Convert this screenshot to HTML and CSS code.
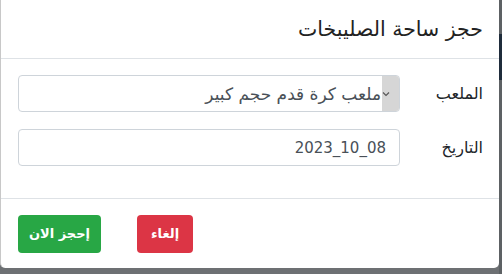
FILE: index.html
```html
<!DOCTYPE html>
<html lang="ar">
<head>
<meta charset="utf-8">
<link rel="stylesheet" href="styles.css">
</head>
<body>
<div class="stage">
  <div class="modal" dir="rtl">
    <div class="modal-header">
      <h5 class="modal-title">حجز ساحة الصليبخات</h5>
    </div>
    <div class="modal-body">
      <div class="form-row">
        <label class="form-label">الملعب</label>
        <div class="select">
          <span class="select-arrow"><svg width="8" height="6" viewBox="0 0 8 6"><path d="M1 1.5 L4 4.5 L7 1.5" fill="none" stroke="#555" stroke-width="1.1"/></svg></span>
          <span class="select-text">ملعب كرة قدم حجم كبير</span>
        </div>
      </div>
      <div class="form-row">
        <label class="form-label">التاريخ</label>
        <div class="input"><span class="ltr" dir="ltr">2023_10_08</span></div>
      </div>
    </div>
    <div class="modal-footer">
      <button class="btn btn-danger">إلغاء</button>
      <button class="btn btn-success">إحجز الان</button>
    </div>
  </div>
  <div class="edge"></div>
</div>
</body>
</html>
```
FILE: styles.css
```css
html, body {
  margin: 0;
  padding: 0;
}
body {
  width: 502px;
  height: 274px;
  background: #6d7073;
  font-family: "DejaVu Sans", "Noto Sans", sans-serif;
  color: #212529;
  overflow: hidden;
}
.stage {
  display: flex;
  direction: ltr;
  height: 274px;
}
.modal {
  width: 499px;
  height: 268px;
  background: #fff;
  border-radius: 0 0 5px 5px;
  display: flex;
  flex-direction: column;
  box-sizing: border-box;
  border-left: 1px solid #c8c8c8;
}
.edge {
  width: 3px;
  height: 274px;
  background: linear-gradient(#5d6164 0, #5d6164 34px, #1f2c3b 34px, #1f2c3b 80px, #5d6164 80px);
}
.modal-header {
  height: 58px;
  border-bottom: 1px solid #dee2e6;
  display: flex;
  align-items: center;
  padding: 0 16px;
}
.modal-title {
  margin: 0;
  font-size: 20.5px;
  font-weight: normal;
  color: #222;
}
.modal-body {
  padding: 16px 16px 32px 16px;
  display: flex;
  flex-direction: column;
  gap: 17px;
  border-bottom: 1px solid #dee2e6;
}
.form-row {
  display: grid;
  grid-template-columns: 83px 382px;
  align-items: center;
}
.form-label {
  font-size: 16px;
  color: #212529;
}
.select, .input {
  height: 37px;
  box-sizing: border-box;
  border: 1px solid #ced4da;
  border-radius: 4px;
  display: flex;
  align-items: center;
  font-size: 17px;
  color: #495057;
}
.select-arrow {
  width: 17px;
  align-self: stretch;
  background: #d6d6d6;
  display: flex;
  align-items: center;
  justify-content: flex-end;
  border-radius: 0 3px 3px 0;
}
.select-text {
  padding-right: 1px;
}
.input {
  padding-right: 13px;
  font-size: 15px;
}
.modal-footer {
  flex: 1;
  display: flex;
  align-items: center;
  justify-content: flex-end;
  gap: 36px;
  padding: 0 17px;
}
.btn {
  height: 38px;
  border: none;
  border-radius: 4px;
  color: #fff;
  font-family: "DejaVu Sans", sans-serif;
  font-size: 13px;
  font-weight: bold;
  padding: 0;
  white-space: nowrap;
}
.btn-danger {
  background: #dc3545;
  width: 56px;
}
.btn-success {
  background: #28a745;
  width: 83px;
}
```
